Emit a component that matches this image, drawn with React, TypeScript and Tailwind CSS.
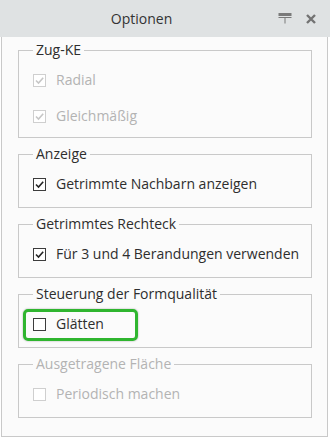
import React from 'react';

type Item = { label: string; checked: boolean };

type Group = {
  title: string;
  titleDisabled?: boolean;
  disabled?: boolean;
  items: Item[];
  highlight?: boolean;
};

const groups: Group[] = [
  {
    title: 'Zug-KE',
    disabled: true,
    items: [
      { label: 'Radial', checked: true },
      { label: 'Gleichmäßig', checked: true },
    ],
  },
  { title: 'Anzeige', items: [{ label: 'Getrimmte Nachbarn anzeigen', checked: true }] },
  { title: 'Getrimmtes Rechteck', items: [{ label: 'Für 3 und 4 Berandungen verwenden', checked: true }] },
  { title: 'Steuerung der Formqualität', highlight: true, items: [{ label: 'Glätten', checked: false }] },
  {
    title: 'Ausgetragene Fläche',
    titleDisabled: true,
    disabled: true,
    items: [{ label: 'Periodisch machen', checked: false }],
  },
];

function Check({ checked, disabled }: { checked: boolean; disabled?: boolean }) {
  return (
    <span
      className={`flex h-[13px] w-[13px] shrink-0 items-center justify-center border bg-white ${
        disabled ? 'border-[#cfcfcf]' : 'border-[#3c3c3c]'
      }`}
    >
      {checked && (
        <svg width="11" height="11" viewBox="0 0 11 11" fill="none">
          <path
            d="M2 5.5 L4.5 8 L9.2 2.8"
            stroke={disabled ? '#c6c6c6' : '#262626'}
            strokeWidth="1.6"
          />
        </svg>
      )}
    </span>
  );
}

function Row({ item, disabled, highlight }: { item: Item; disabled?: boolean; highlight?: boolean }) {
  return (
    <div className="relative flex h-[24px] items-center gap-[10px] whitespace-nowrap">
      <Check checked={item.checked} disabled={disabled} />
      <span className={disabled ? 'text-[#b3b3b3]' : 'text-[#2e2e2e]'}>{item.label}</span>
      {highlight && (
        <span className="pointer-events-none absolute left-[-10px] top-[-3px] h-[32px] w-[115px] rounded-[5px] border-[3px] border-[#2fb52f] shadow-[0_0_2px_rgba(0,0,0,0.35)]" />
      )}
    </div>
  );
}

export default function App() {
  return (
    <div
      className="h-[438px] w-[330px] bg-white text-[14px] leading-[20px]"
      style={{ fontFamily: '"Open Sans", "Noto Sans", sans-serif' }}
    >
      {/* title bar */}
      <div className="flex h-[37px] items-center bg-[#dfe2e3] pl-[1px]">
        <div className="flex-1 pl-[4px] text-center text-[#333]">Optionen</div>
        <div className="flex items-center gap-[14px] pr-[14px]">
          <svg width="14" height="11" viewBox="0 0 14 11">
            <rect x="0.5" y="0" width="13" height="3" fill="#7a7a7a" />
            <rect x="0.5" y="4" width="13" height="1" fill="#7a7a7a" />
            <rect x="6.5" y="5" width="1" height="5.5" fill="#7a7a7a" />
          </svg>
          <svg width="10" height="10" viewBox="0 0 10 10">
            <path d="M1 1 L9 9 M9 1 L1 9" stroke="#737373" strokeWidth="2.4" />
          </svg>
        </div>
      </div>

      {/* body */}
      <div className="ml-[1px] flex h-[400px] w-[327px] flex-col gap-[6px] border-x border-b border-[#c9c9c9] bg-[#fbfbfb] pl-[16px] pr-[15px] pt-[3px]">
        {groups.map((g, gi) => (
          <fieldset
            key={g.title}
            className={`border border-[#c9c9c9] pl-[14px] pt-[8px] ${gi === 0 ? 'pb-[9px]' : 'pb-[11px]'}`}
          >
            <legend className={`px-[3px] ${g.titleDisabled ? 'text-[#b3b3b3]' : 'text-[#2e2e2e]'}`}>
              {g.title}
            </legend>
            <div className="flex flex-col gap-[12px]">
              {g.items.map((it) => (
                <Row key={it.label} item={it} disabled={g.disabled} highlight={g.highlight} />
              ))}
            </div>
          </fieldset>
        ))}
      </div>
    </div>
  );
}
